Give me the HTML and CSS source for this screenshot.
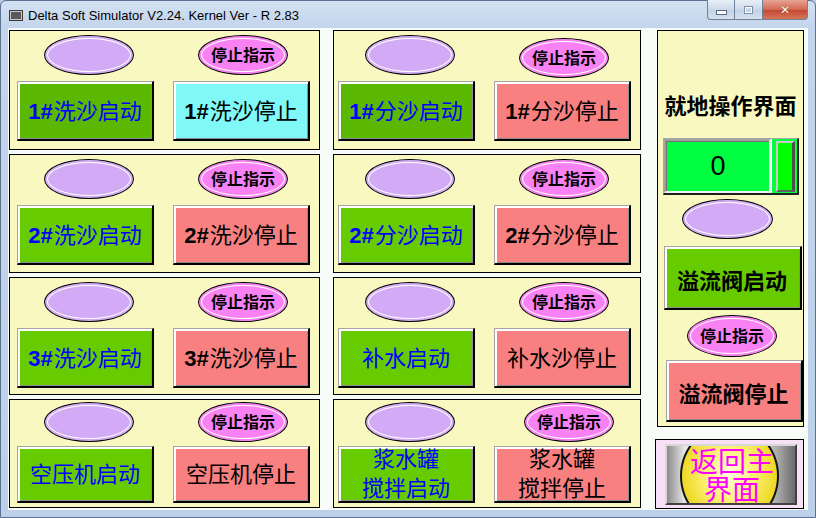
FILE: index.html
```html
<!DOCTYPE html>
<html>
<head>
<meta charset="utf-8">
<link rel="stylesheet" href="styles.css">
</head>
<body>
<div class="win">
  <div class="titlebar">
    <span class="appicon"></span>
    <span class="title">Delta Soft Simulator V2.24. Kernel Ver - R 2.83</span>
    <div class="caption">
      <span class="cb min"><i></i></span><span class="cb max"><i></i></span><span class="cb close">&#10005;</span>
    </div>
  </div>
  <div class="client">
    <div class="grid">
      <div class="panel">
        <div class="oval"></div>
        <div class="oval stop">停止指示</div>
        <div class="btn start dk"><b>1#</b>洗沙启动</div>
        <div class="btn cyan"><b>1#</b>洗沙停止</div>
      </div>
      <div class="panel mid">
        <div class="oval"></div>
        <div class="oval stop low">停止指示</div>
        <div class="btn start dk"><b>1#</b>分沙启动</div>
        <div class="btn red"><b>1#</b>分沙停止</div>
      </div>
      <div class="panel">
        <div class="oval"></div>
        <div class="oval stop">停止指示</div>
        <div class="btn start"><b>2#</b>洗沙启动</div>
        <div class="btn red"><b>2#</b>洗沙停止</div>
      </div>
      <div class="panel mid">
        <div class="oval"></div>
        <div class="oval stop">停止指示</div>
        <div class="btn start"><b>2#</b>分沙启动</div>
        <div class="btn red"><b>2#</b>分沙停止</div>
      </div>
      <div class="panel">
        <div class="oval"></div>
        <div class="oval stop">停止指示</div>
        <div class="btn start"><b>3#</b>洗沙启动</div>
        <div class="btn red"><b>3#</b>洗沙停止</div>
      </div>
      <div class="panel mid">
        <div class="oval"></div>
        <div class="oval stop">停止指示</div>
        <div class="btn start">补水启动</div>
        <div class="btn red">补水沙停止</div>
      </div>
      <div class="panel short">
        <div class="oval"></div>
        <div class="oval stop">停止指示</div>
        <div class="btn start">空压机启动</div>
        <div class="btn red">空压机停止</div>
      </div>
      <div class="panel mid short">
        <div class="oval"></div>
        <div class="oval stop right">停止指示</div>
        <div class="btn start two">浆水罐<br>搅拌启动</div>
        <div class="btn red two">浆水罐<br>搅拌停止</div>
      </div>
    </div>
    <div class="side">
      <div class="local">
        <div class="localtitle">就地操作界面</div>
        <div class="numdisp">
          <div class="numval">0</div>
          <div class="numbar"><span></span></div>
        </div>
        <div class="oval side-oval"></div>
        <div class="btn start sidebtn1">溢流阀启动</div>
        <div class="oval stop side-stop">停止指示</div>
        <div class="btn red sidebtn2">溢流阀停止</div>
      </div>
      <div class="home">
        <div class="homebtn">
          <div class="sun"></div>
          <div class="hometext">返回主<br>界面</div>
        </div>
      </div>
    </div>
  </div>
</div>
</body>
</html>
```
FILE: styles.css
```css
html, body {
  margin: 0;
  padding: 0;
  width: 816px;
  height: 518px;
  overflow: hidden;
  background: #b9cde6;
}

.win {
  width: 816px;
  height: 518px;
  box-sizing: border-box;
  border: 1px solid #5d7290;
  border-radius: 6px 6px 0 0;
  background: linear-gradient(180deg, #d3e1f2 0px, #c2d5ec 28px, #bcd0e9 100%);
  padding: 0 7px 7px 7px;
  display: flex;
  flex-direction: column;
}

.titlebar {
  height: 27px;
  display: flex;
  align-items: center;
  position: relative;
}

.appicon {
  width: 12px;
  height: 9px;
  margin-left: 1px;
  margin-top: 2px;
  border: 1px solid #3c3c3c;
  box-shadow: inset 0 0 0 1px #c8c8c8;
  background: #5a5a5a;
}

.title {
  margin-left: 5px;
  margin-top: 2px;
  font-family: "Liberation Sans", "Noto Sans", sans-serif;
  font-size: 13px;
  color: #000;
}

.caption {
  margin-left: auto;
  align-self: flex-start;
  margin-top: -1px;
  display: flex;
  height: 20px;
}

.cb {
  box-sizing: border-box;
  height: 20px;
  display: flex;
  align-items: center;
  justify-content: center;
  border: 1px solid #6f819b;
  border-top: none;
}

.min {
  width: 27px;
  border-radius: 0 0 0 4px;
  border-right: none;
  background: linear-gradient(180deg, #e9eff8, #ccd9ea 50%, #c1d0e5 51%, #d6e2f0);
}

.max {
  width: 28px;
  border-right: none;
  background: linear-gradient(180deg, #e9eff8, #ccd9ea 50%, #c1d0e5 51%, #d6e2f0);
}

.min i {
  display: block;
  width: 9px;
  height: 3px;
  margin-top: 6px;
  background: #fff;
  border: 1px solid #5a6a80;
}

.max i {
  display: block;
  width: 7px;
  height: 6px;
  border: 1px solid #8090a8;
  box-shadow: inset 0 0 0 1px #fff;
}

.close {
  width: 46px;
  border-radius: 0 0 4px 0;
  background: linear-gradient(180deg, #e8a493, #d26a55 50%, #c24630 51%, #d8765a);
  color: #fff;
  font-family: "DejaVu Sans", sans-serif;
  font-size: 12px;
  font-weight: bold;
  text-shadow: 0 0 1px #602010;
}

.client {
  width: 800px;
  height: 482px;
  box-sizing: border-box;
  background: #f8fcf8;
  display: flex;
  padding: 2px 0 0 1px;
}

.grid {
  display: grid;
  grid-template-columns: 311px 308px;
  grid-template-rows: 120px 119px 118px 109px;
  gap: 4px 13px;
}

.panel {
  box-sizing: border-box;
  border: 1px solid #000;
  background: #f8f8c0;
  display: grid;
  grid-template-columns: 137px 137px;
  grid-template-rows: 40px 60px;
  column-gap: 19px;
  row-gap: 6px;
  padding: 4px 0 0 7px;
  align-content: start;
}

.panel.mid {
  padding-left: 4px;
}

.panel.short {
  padding-top: 2px;
  grid-template-rows: 40px 57px;
  row-gap: 4px;
}

.oval {
  box-sizing: border-box;
  width: 90px;
  height: 40px;
  margin-left: 27px;
  border: 1px solid #000;
  border-radius: 50%;
  background: #d2aaf6;
  box-shadow: inset 0 0 0 2px #d2aaf6, inset 0 0 0 3px #ffffff;
}

.oval.stop {
  margin-left: 25px;
  background: #f882f4;
  box-shadow: inset 0 0 0 2px #f882f4, inset 0 0 0 3px #ffffff;
  font-family: "Noto Sans CJK SC", sans-serif;
  font-size: 16px;
  font-weight: bold;
  line-height: 37px;
  text-align: center;
  color: #000;
}

.oval.stop.low {
  margin-top: 3px;
}

.oval.stop.right {
  margin-left: 30px;
}

.btn {
  box-sizing: border-box;
  width: 137px;
  height: 100%;
  display: flex;
  align-items: center;
  justify-content: center;
  text-align: center;
  border-style: solid;
  border-width: 1px 2px 2px 1px;
  border-color: #a4a4a4 #000 #000 #a4a4a4;
  box-shadow: inset 2px 2px 0 #ffffff, inset -1px -1px 0 #8c8c8c;
  font-family: "Liberation Sans", "Noto Sans CJK SC", sans-serif;
  font-size: 22px;
  line-height: 1;
  color: #000;
  padding-top: 2px;
}

.btn b {
  font-weight: bold;
  margin-right: 1px;
}

.btn.start {
  background: #66cc00;
  color: #0000ff;
}

.btn.start.dk {
  background: #5ab800;
}

.btn.cyan {
  background: #80f8f8;
}

.btn.red {
  background: #f88080;
}

.btn.two {
  line-height: 29px;
  padding-top: 0;
}

.side {
  margin-left: 16px;
  width: 147px;
  display: flex;
  flex-direction: column;
}

.local {
  box-sizing: border-box;
  height: 397px;
  border: 1px solid #000;
  background: #f8f8c0;
  display: flex;
  flex-direction: column;
  align-items: center;
}

.localtitle {
  margin-top: 58px;
  height: 30px;
  line-height: 30px;
  font-family: "Noto Sans CJK SC", sans-serif;
  font-size: 22px;
  font-weight: bold;
  color: #000;
}

.numdisp {
  margin-top: 19px;
  box-sizing: border-box;
  width: 136px;
  height: 57px;
  display: flex;
  border-style: solid;
  border-width: 1px 2px 2px 1px;
  border-color: #a8a8a8 #202020 #202020 #a8a8a8;
  background: #d8d8d8;
}

.numval {
  box-sizing: border-box;
  flex: 0 0 107px;
  background: #00ff40;
  border-style: solid;
  border-width: 2px;
  border-color: #a0a0a0 #f0f0f0 #f0f0f0 #a0a0a0;
  box-shadow: inset 1px 1px 0 #707070;
  display: flex;
  align-items: center;
  justify-content: center;
  font-family: "Liberation Sans", sans-serif;
  font-size: 27px;
  color: #000;
  padding-left: 2px;
}

.numbar {
  flex: 1;
  box-sizing: border-box;
  background: #00ff40;
  border-left: 1px solid #fff;
  padding: 2px 2px 1px 4px;
  display: flex;
}

.numbar span {
  flex: 1;
  box-sizing: border-box;
  background: #00ff00;
  border-style: solid;
  border-width: 2px 3px 2px 2px;
  border-color: #c8c8c8 #505050 #606060 #c8c8c8;
}

.oval.side-oval {
  margin: 4px 6px 0 0;
  width: 91px;
}

.btn.sidebtn1 {
  margin-top: 7px;
  width: 138px;
  height: 64px;
  color: #000;
  font-family: "Noto Sans CJK SC", sans-serif;
  font-weight: bold;
  margin-left: 4px;
}

.oval.stop.side-stop {
  margin: 5px 0 0 3px;
  height: 42px;
  line-height: 39px;
}

.btn.sidebtn2 {
  margin-top: 3px;
  width: 137px;
  height: 62px;
  font-family: "Noto Sans CJK SC", sans-serif;
  font-weight: bold;
  margin-left: 7px;
}

.home {
  margin-top: 12px;
  margin-left: -2px;
  box-sizing: border-box;
  width: 149px;
  height: 70px;
  border: 1px solid #000;
  background: #f8e0f6;
  padding: 4px 0 0 9px;
}

.homebtn {
  position: relative;
  overflow: hidden;
  box-sizing: border-box;
  width: 132px;
  height: 61px;
  border-style: solid;
  border-width: 2px;
  border-color: #d8d8d8 #404040 #404040 #d8d8d8;
  background: linear-gradient(90deg, #8a8a8a 0%, #e8e8e8 14%, #f4f4f4 30%, #dcdcdc 60%, #b0b0b0 85%, #6a6a6a 100%);
}

.sun {
  position: absolute;
  left: 13px;
  top: -22px;
  width: 99px;
  height: 104px;
  box-sizing: border-box;
  border: 2px solid #141414;
  border-radius: 50%;
  background: radial-gradient(ellipse at 50% 48%, #ffffe0 0%, #fdf27a 35%, #f0dc30 65%, #d8b800 100%);
}

.hometext {
  position: relative;
  text-align: center;
  font-family: "Noto Sans CJK SC", sans-serif;
  font-size: 28px;
  line-height: 28px;
  color: #ff00ff;
  margin-left: 2px;
}
```
